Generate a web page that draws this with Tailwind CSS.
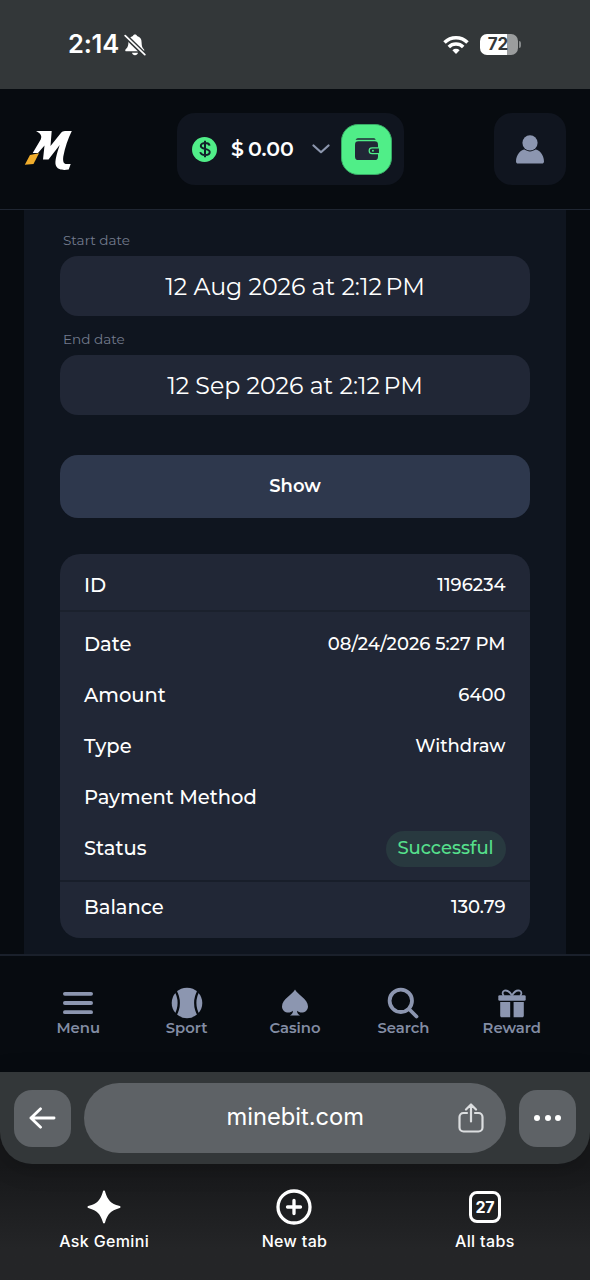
<!DOCTYPE html>
<html lang="en">
<head>
<meta charset="utf-8">
<title>minebit.com</title>
<script src="https://cdn.jsdelivr.net/npm/@tailwindcss/browser@4"></script>
</head>
<body class="bg-[#1f2022] font-['Montserrat','Inter',sans-serif] text-white">
<div class="flex h-[1280px] w-[590px] flex-col overflow-hidden">

  <!-- Status bar -->
  <div class="flex h-[89px] shrink-0 items-center justify-between bg-[#333739] pr-[69px] pl-[68px] font-['Inter',sans-serif]">
    <div class="flex items-center gap-[5px]">
      <span class="text-[25.500px] font-semibold tracking-[-0.2px]">2:14</span>
      <svg class="h-[24px] w-[22px]" viewBox="0 0 22 24" fill="none"><path d="M11 1.500c1.200 0 1.900.7 2.100 1.600 3 .8 4.500 3.200 4.500 6.300 0 4 .9 5.500 2.400 7 .6.7.2 1.900-.8 1.900H2.300c-1 0-1.400-1.200-.8-1.900C3 14.900 4.400 13.400 4.400 9.400c0-3.100 1.500-5.500 4.500-6.300.2-.9.900-1.600 2.100-1.600zM8 19.800h6c-.3 1.500-1.500 2.400-3 2.400s-2.700-.9-3-2.400z" fill="#fff"/><path d="M1 2.500 21 22" stroke="#333739" stroke-width="4.600"/><path d="M1.200 2.700 20.800 21.700" stroke="#fff" stroke-width="1.700" stroke-linecap="round"/></svg>
    </div>
    <div class="flex items-center gap-[11px]">
      <svg class="h-[20px] w-[26px]" viewBox="0 0 26 20" fill="none" stroke="#fff" stroke-width="3.500"><path d="M1.500 7.400a16.300 16.300 0 0 1 23 0"/><path d="M5.800 12a10.200 10.200 0 0 1 14.400 0"/><path d="M13 19l3.600-3.700a5.100 5.100 0 0 0-7.200 0z" fill="#fff" stroke="none"/></svg>
      <div class="flex items-center gap-px">
        <div class="flex h-[21px] w-[38px] items-center justify-center rounded-[7px] bg-linear-to-r from-white from-72% to-[#9b9d9e] to-72% pt-px pr-[2px]"><span class="text-[17px] font-bold text-[#333739]">72</span></div>
        <div class="h-[7px] w-[2px] rounded-r-full bg-[#85888a]"></div>
      </div>
    </div>
  </div>

  <!-- Site header -->
  <div class="flex h-[121px] shrink-0 items-center justify-between border-b border-[#1f2632] bg-[#070b10] px-[24px]">
    <svg class="mt-px h-[42px] w-[49px]" viewBox="0 0 49 42"><path d="M12 2H27.700L26.500 17 36.500 4.500C38 2.700 39.300 2 41 2H47.800C44 10 41 18 39.300 27.500c-.6 5 .2 7.500 3.400 7.500h4l-2 5.500c-6 1-11.500.3-13-4.500-1-4 1-11 4-20L24.500 30.500H19L20.500 16.500 14 24H8.700L16.700 10.500C18.200 7 17 4.500 12 2z" fill="#fff"/><path d="M6 26 15 24.300 9.500 35 .8 35.800z" fill="#f0ad2c"/></svg>
    <div class="ml-[14px] flex h-[72px] w-[227px] items-center rounded-[18px] bg-[#10151f] pl-[15px]">
      <div class="flex size-[25px] items-center justify-center rounded-full bg-[#50ee88]">
        <svg class="h-[18px] w-[14px]" viewBox="0 0 14 18" fill="none" stroke="#12202a" stroke-width="2"><path d="M7 .8v16.400M11.600 5.600C11.300 3.900 9.600 3 7.200 3 4.700 3 2.800 4 2.800 5.900 2.800 9.900 11.700 7.800 11.700 12c0 2-2 3-4.500 3s-4.500-1-4.900-2.900"/></svg>
      </div>
      <div class="ml-[14px] flex gap-[4px] text-[20.500px] font-semibold"><span>$</span><span>0.00</span></div>
      <svg class="ml-[18px] h-[10px] w-[18px]" viewBox="0 0 18 10" fill="none" stroke="#8c96ad" stroke-width="2.200" stroke-linecap="round" stroke-linejoin="round"><path d="M1.500 1.500 9 8.200l7.500-6.700"/></svg>
      <div class="mr-[12px] ml-auto flex size-[51px] items-center justify-center rounded-[17px] border border-[#38a866] bg-[#50ee88]">
        <svg class="h-[23px] w-[25px]" viewBox="0 0 26 24"><path d="M5.500.3h15c1 0 1.700.6 2 1.500H1.700C2.200.8 3.500.3 5.500.3z" fill="#212736"/><rect x="1" y="3.500" width="24" height="19.500" rx="3.500" fill="#212736"/><path d="M26 10.300h-7.200a3 3 0 0 0 0 6H26" fill="#212736" stroke="#50ee88" stroke-width="1.300"/><circle cx="19.700" cy="13.300" r="1" fill="#50ee88"/></svg>
      </div>
    </div>
    <div class="flex size-[72px] items-center justify-center rounded-[18px] bg-[#10151f]">
      <svg class="h-[29px] w-[28px]" viewBox="0 0 28 29" fill="#8c96b0"><circle cx="14" cy="7.800" r="7.600"/><path d="M0 26.500C0 20 5 14.600 8.500 14.600c1.800 1.200 3.500 1.800 5.500 1.800s3.700-.6 5.500-1.800C23 14.600 28 20 28 26.500c0 1.300-.8 2.100-2 2.100H2c-1.200 0-2-.8-2-2.100z"/></svg>
    </div>
  </div>

  <!-- Transaction history -->
  <div class="flex min-h-0 flex-1 bg-[#070b10] px-[24px]">
    <div class="flex flex-1 flex-col bg-[#0f151f] px-[36px] pt-[20px]">
      <label class="flex h-[20px] shrink-0 items-center pl-[3px] text-[13.600px] text-[#737b8d]"><span>Start date</span></label>
      <div class="mt-[6.300px] flex h-[60px] shrink-0 items-center justify-center rounded-[18px] bg-[#212736] pt-px text-[23.700px] font-normal"><span>12 Aug 2026 at 2:12<span class="ml-[3.500px]">PM</span></span></div>
      <label class="mt-[12.700px] flex h-[20px] shrink-0 items-center pl-[3px] text-[13.600px] text-[#737b8d]"><span>End date</span></label>
      <div class="mt-[6.400px] flex h-[60px] shrink-0 items-center justify-center rounded-[18px] bg-[#212736] pt-px text-[23.700px] font-normal"><span>12 Sep 2026 at 2:12<span class="ml-[3.500px]">PM</span></span></div>
      <div class="mt-[39.200px] flex h-[63px] shrink-0 items-center justify-center rounded-[18px] bg-[#2e384d] pt-px text-[18px] font-semibold"><span>Show</span></div>

      <div class="mt-[36px] flex h-[384.500px] shrink-0 flex-col overflow-hidden rounded-[20px] bg-[#212736] text-[19.500px] font-medium">
        <div class="flex h-[58px] shrink-0 items-center justify-between border-b-2 border-[#1b212d] px-[24px] pt-[7.500px] pr-[24.500px]"><span>ID</span><span class="text-[18px]">1196234</span></div>
        <div class="flex flex-col pt-[7.500px] pr-[24.500px] pl-[24px]">
          <div class="flex h-[51px] items-center justify-between"><span>Date</span><span class="text-[18px]">08/24/2026 5:27 PM</span></div>
          <div class="flex h-[51px] items-center justify-between"><span>Amount</span><span class="text-[18px]">6400</span></div>
          <div class="flex h-[51px] items-center justify-between"><span>Type</span><span class="text-[18px]">Withdraw</span></div>
          <div class="flex h-[51px] items-center justify-between"><span>Payment Method</span></div>
          <div class="flex h-[51px] items-center justify-between"><span>Status</span><div class="flex h-[36px] w-[120px] items-center justify-center rounded-full bg-[#28393f] text-[18px] text-[#56e08c]"><span>Successful</span></div></div>
        </div>
        <div class="mt-[6px] flex flex-1 items-center justify-between border-t-2 border-[#181e2a] pr-[24.500px] pb-[5.500px] pl-[24px]"><span>Balance</span><span class="text-[18px]">130.79</span></div>
      </div>
    </div>
  </div>

  <!-- Site navigation -->
  <div class="grid h-[118px] shrink-0 grid-cols-5 border-t-2 border-[#1a202b] bg-[#070b10] px-[24px] pt-[31px] text-[14.800px] leading-[20px] font-semibold text-[#838da4]">
    <div class="flex flex-col items-center"><svg class="size-[32px]" viewBox="0 0 32 32" stroke="#8c96b0" stroke-width="3.800" stroke-linecap="round"><path d="M2.900 6.800h26.200M2.900 16h26.200M2.900 25.200h26.200"/></svg><span class="-mt-px">Menu</span></div>
    <div class="flex flex-col items-center"><svg class="size-[32px]" viewBox="0 0 32 32"><circle cx="16" cy="16" r="15.300" fill="#8c96b0"/><path d="M4 3c5 8 5 18 0 26M28 3c-5 8-5 18 0 26" fill="none" stroke="#070b10" stroke-width="2.300"/></svg><span class="-mt-px">Sport</span></div>
    <div class="flex flex-col items-center"><svg class="size-[32px]" viewBox="0 0 32 32" fill="#8c96b0"><path d="M16 2.500C18 7 29 12 29 19.500c0 5.700-7 8-11 4.300.1 2.200 1 3.600 3 4.700H11c2-1.100 2.900-2.500 3-4.700-4 3.700-11 1.400-11-4.300C3 12 14 7 16 2.500z"/></svg><span class="-mt-px">Casino</span></div>
    <div class="flex flex-col items-center"><svg class="size-[32px]" viewBox="0 0 32 32" fill="none" stroke="#8c96b0" stroke-width="3.800" stroke-linecap="round"><circle cx="13.800" cy="13.800" r="11.200"/><path d="m22 22 7.500 7.500"/></svg><span class="-mt-px">Search</span></div>
    <div class="flex flex-col items-center"><svg class="size-[32px]" viewBox="0 0 32 32"><g fill="#8c96b0"><rect x="2.300" y="8.200" width="27.400" height="5.600" rx="1.400"/><path d="M4.200 15h10v15.300H5.700c-.8 0-1.500-.7-1.500-1.500zM17.600 15h10.200v13.800c0 .8-.7 1.500-1.500 1.500h-8.700z"/></g><path d="M16 8.500C14 5 11 3 8.500 3.700c-2.500.8-2.400 3.800-.5 5M16 8.500c2-3.500 5-5.500 7.500-4.800 2.500.8 2.400 3.800.5 5" fill="none" stroke="#8c96b0" stroke-width="1.800"/></svg><span class="-mt-px">Reward</span></div>
  </div>

  <!-- Browser chrome -->
  <div class="flex h-[208px] shrink-0 flex-col bg-linear-to-b from-[#17181a] from-45% to-[#242527] to-85% font-['Inter',sans-serif]">
    <div class="flex h-[92px] items-center justify-between rounded-b-[32px] bg-[#333739] px-[14px] shadow-[0_4px_24px_rgba(0,0,0,0.2)]">
      <div class="flex size-[57px] items-center justify-center rounded-[18px] bg-[#5e6266]">
        <svg class="mr-px h-[22px] w-[27px]" viewBox="0 0 28 22" fill="none" stroke="#fff" stroke-width="2.900" stroke-linecap="round" stroke-linejoin="round"><path d="M26 11H2M12 1.500 2 11l10 9.500"/></svg>
      </div>
      <div class="flex h-[70px] w-[422px] items-center justify-end rounded-full bg-[#5e6266] pr-[22px]">
        <span class="mr-[94px] mb-[2px] text-[23.700px]">minebit.com</span>
        <svg class="h-[30px] w-[26px]" viewBox="0 0 26 30" fill="none" stroke="#dcdee0" stroke-width="2.200" stroke-linecap="round" stroke-linejoin="round"><path d="M9 10H5.500A4 4 0 0 0 1.500 14v10.500a4 4 0 0 0 4 4h15a4 4 0 0 0 4-4V14a4 4 0 0 0-4-4H17M13 18.500V2M8 6.500l5-5 5 5"/></svg>
      </div>
      <div class="flex size-[57px] items-center justify-center gap-[4.500px] rounded-[18px] bg-[#5e6266]"><i class="size-[6px] rounded-full bg-white"></i><i class="size-[6px] rounded-full bg-white"></i><i class="size-[6px] rounded-full bg-white"></i></div>
    </div>
    <div class="grid flex-1 grid-cols-3 px-[9px] pt-[25px] pr-[10px] text-[16px] font-medium tracking-[0.35px]">
      <div class="flex flex-col items-center gap-[4px]"><svg class="size-[36px]" viewBox="0 0 36 36" fill="#fff"><path d="M18 1.500c.8 0 1 .6 1.200 1.400C21.500 11 25 14.500 33 16.800c1 .3 1.500.6 1.500 1.200s-.5.9-1.500 1.200C25 21.500 21.500 25 19.200 33.100c-.2.8-.4 1.400-1.200 1.400s-1-.6-1.200-1.400C14.500 25 11 21.500 3 19.200c-1-.3-1.500-.6-1.500-1.200s.5-.9 1.500-1.200C11 14.500 14.500 11 16.800 2.900c.2-.8.4-1.400 1.200-1.400z"/></svg><span>Ask Gemini</span></div>
      <div class="flex flex-col items-center gap-[4px]"><svg class="size-[36px]" viewBox="0 0 36 36" fill="none" stroke="#fff" stroke-width="3.300" stroke-linecap="round"><circle cx="18" cy="18" r="16"/><path d="M18 11.500v13M11.500 18h13"/></svg><span>New tab</span></div>
      <div class="flex flex-col items-center gap-[4px]"><div class="flex size-[36px] items-center justify-center"><div class="flex size-[32px] items-center justify-center rounded-[8px] border-[3px] border-white"><span class="text-[16px] font-bold tracking-[-0.5px]">27</span></div></div><span>All tabs</span></div>
    </div>
  </div>
</div>
</body>
</html>
